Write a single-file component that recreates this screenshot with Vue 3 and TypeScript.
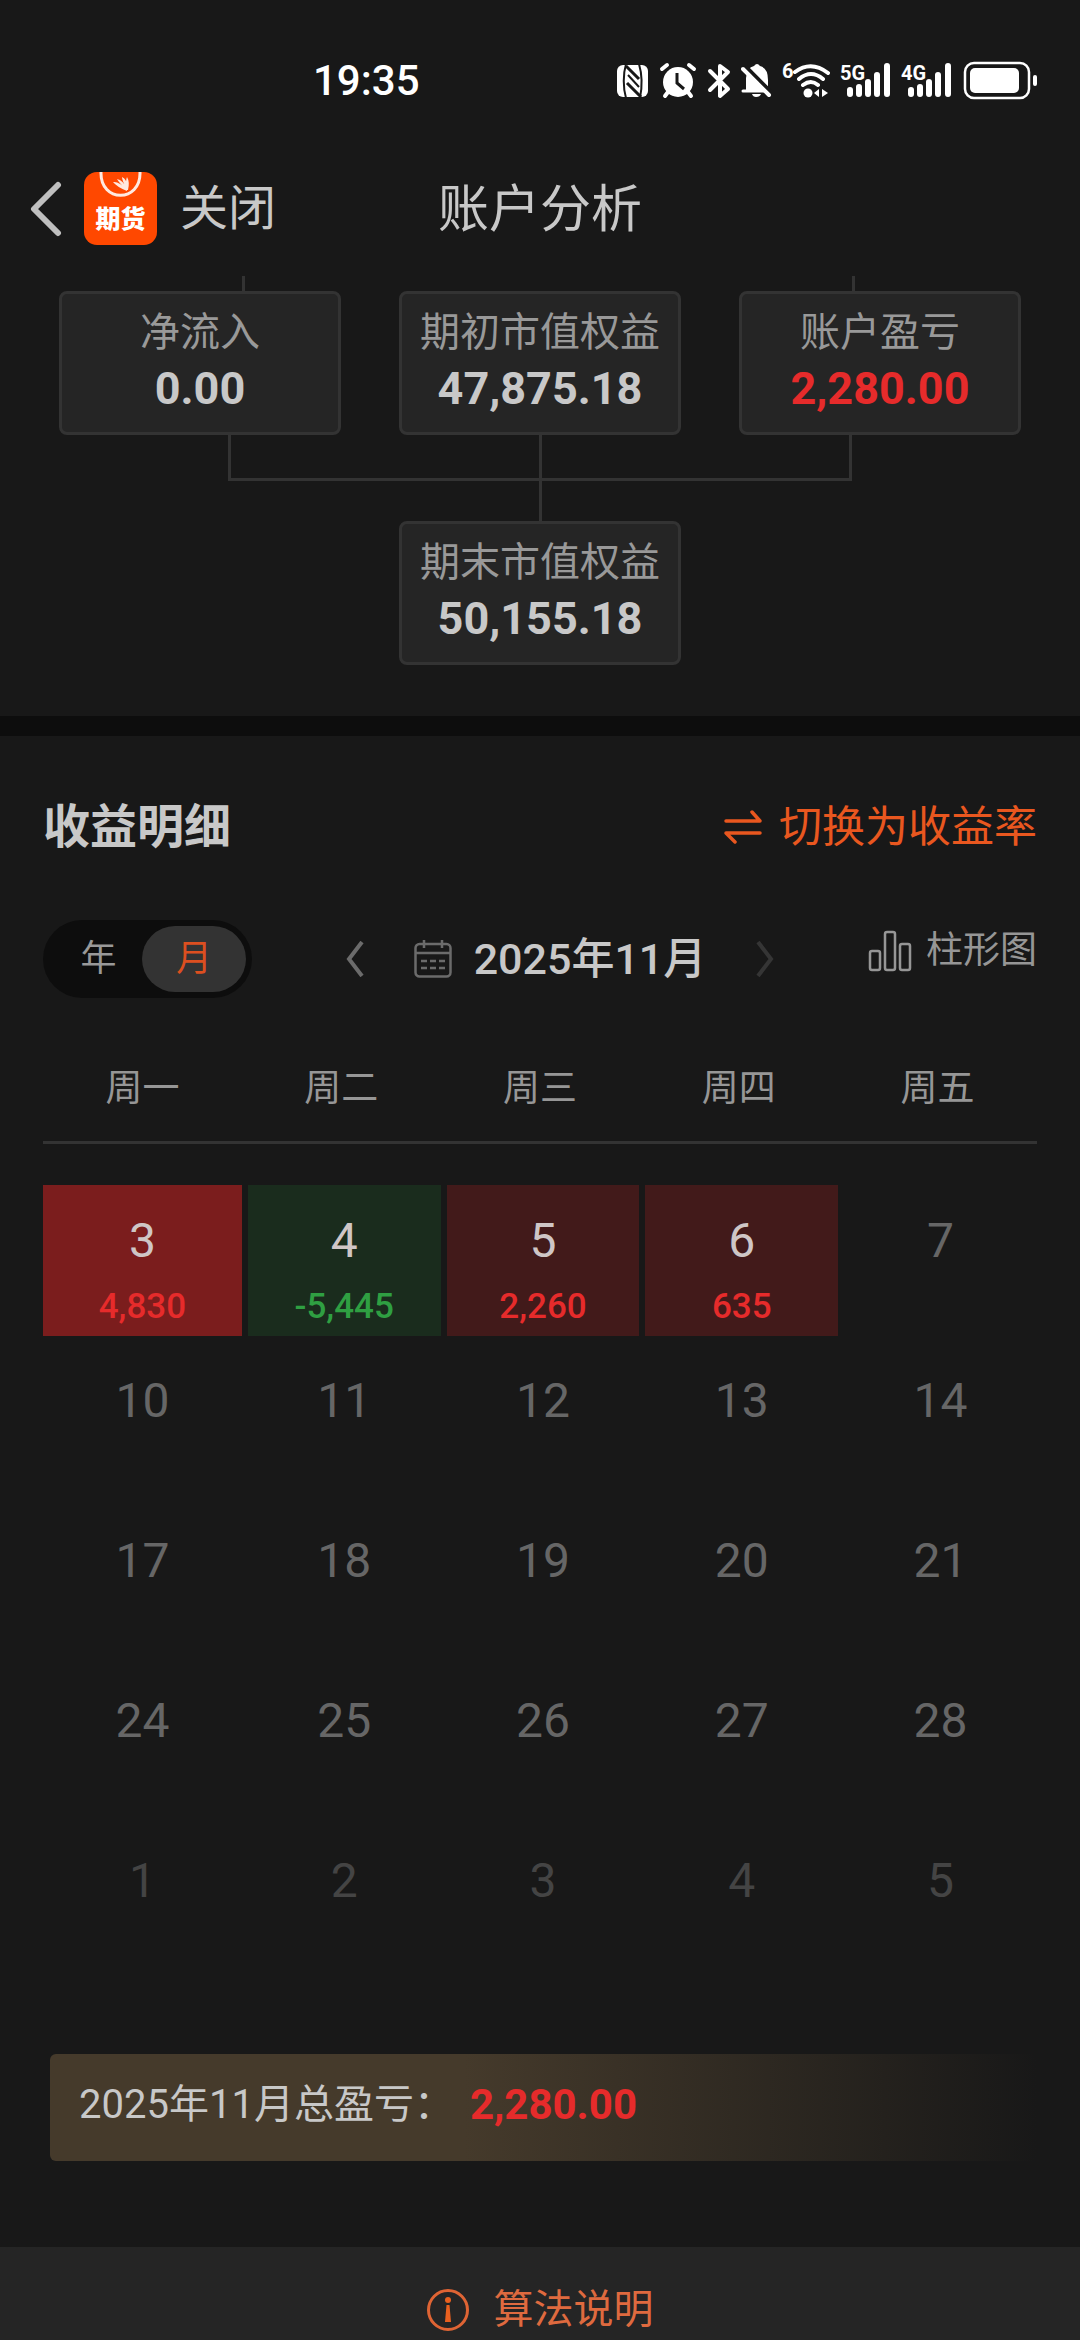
<script setup lang="ts">
import { ref } from 'vue'

interface Figure {
  label: string
  value: string
  gain?: boolean
}

interface Day {
  day: number
  profit?: string
  tone?: 'gain-strong' | 'gain' | 'loss'
  outside?: boolean
}

const sources: Figure[] = [
  { label: '净流入', value: '0.00' },
  { label: '期初市值权益', value: '47,875.18' },
  { label: '账户盈亏', value: '2,280.00', gain: true },
]
const closing: Figure = { label: '期末市值权益', value: '50,155.18' }

const period = ref<'year' | 'month'>('month')
const weekdays = ['周一', '周二', '周三', '周四', '周五']

const plain = (from: number, outside = false): Day[] =>
  Array.from({ length: 5 }, (_, i) => ({ day: from + i, outside }))

const weeks: Day[][] = [
  [
    { day: 3, profit: '4,830', tone: 'gain-strong' },
    { day: 4, profit: '-5,445', tone: 'loss' },
    { day: 5, profit: '2,260', tone: 'gain' },
    { day: 6, profit: '635', tone: 'gain' },
    { day: 7 },
  ],
  plain(10),
  plain(17),
  plain(24),
  plain(1, true),
]

const networks = ['5G', '4G']
</script>

<template>
  <div class="page">
    <div class="status">
      <span class="time">19:35</span>
      <div class="status-icons">
        <svg width="32" height="42" viewBox="0 0 32 42">
          <rect x="0" y="5" width="31" height="32" rx="6" fill="#fff" />
          <path d="M9 4 C6 14 6 28 9 38 M22 4 C25 14 25 28 23 38" fill="none" stroke="#181818" stroke-width="2" />
          <path d="M9 6 L22 19 M10 23 L24 37" fill="none" stroke="#181818" stroke-width="3" />
          <path d="M11 15 L22 27" fill="none" stroke="#181818" stroke-width="2" />
        </svg>
        <svg width="38" height="42" viewBox="0 0 38 42">
          <circle cx="19" cy="22" r="15" fill="#fff" />
          <path d="M3 9 L8 5 M30 5 L35 9" stroke="#fff" stroke-width="4" stroke-linecap="round" />
          <path d="M9 32 L6 36 M29 32 L32 36" stroke="#fff" stroke-width="4" stroke-linecap="round" />
          <path d="M18 13 V23 L25 29" fill="none" stroke="#181818" stroke-width="3" />
        </svg>
        <svg width="24" height="42" viewBox="0 0 24 42">
          <path d="M3 11 L21 29 L13 36 V6 L21 12 L3 30" fill="none" stroke="#fff" stroke-width="4" stroke-linejoin="round" stroke-linecap="round" />
        </svg>
        <svg width="31" height="42" viewBox="0 0 31 42">
          <path d="M5 32 V18 Q6 7 13 6 Q16 2 19 6 Q27 8 27 20 V32 Z" fill="#fff" />
          <path d="M2 31 H25" stroke="#fff" stroke-width="3" stroke-linecap="round" />
          <path d="M11 34 H20 Q19 37 15 37 Q12 37 11 34 Z" fill="#fff" />
          <path d="M4 6 L31 33" stroke="#181818" stroke-width="4" />
          <path d="M2 9 L28 35" stroke="#fff" stroke-width="4" stroke-linecap="round" />
        </svg>
        <svg width="48" height="42" viewBox="0 0 48 42">
          <text x="0" y="18" class="badge">6</text>
          <path d="M13 12 Q29 0 46 13 M17 19 Q29 9 41 19 M21 25 Q29 19 36 25" fill="none" stroke="#fff" stroke-width="4" stroke-linecap="round" />
          <circle cx="26" cy="33" r="4.5" fill="#fff" />
          <path d="M37 29 V37 L32 33 Z M40 29 L46 33 L40 37 Z" fill="#fff" />
        </svg>
        <svg v-for="n in networks" :key="n" width="51" height="42" viewBox="0 0 51 42">
          <text x="0" y="20" class="badge">{{ n }}</text>
          <path d="M10 30 V34 M19 27 V34 M28 22 V34 M37 15 V34 M47 6 V34" stroke="#fff" stroke-width="6" stroke-linecap="round" />
        </svg>
        <svg width="75" height="42" viewBox="0 0 75 42">
          <rect x="3" y="3" width="64" height="35" rx="9" fill="none" stroke="#fff" stroke-width="2.5" />
          <rect x="8" y="8" width="49" height="25" rx="5" fill="#fff" />
          <rect x="71" y="15" width="4" height="11" rx="2" fill="#fff" />
        </svg>
      </div>
    </div>

    <header class="nav">
      <div class="nav-left">
        <button class="back" type="button" aria-label="返回">
          <svg width="32" height="56" viewBox="0 0 32 56">
            <path d="M28 4 L4 28 L28 52" fill="none" stroke="#bfbfbf" stroke-width="6" stroke-linecap="round" stroke-linejoin="round" />
          </svg>
        </button>
        <span class="logo">
          <svg width="73" height="28" viewBox="0 0 73 28">
            <path d="M17 0 C16 31 57 31 56 0" fill="none" stroke="#ffe9e0" stroke-width="3" />
            <path d="M43 19 Q33 15 29 10 Q35 9 43 18 Z M43 18 Q35 11 33 7 Q39 8 43 17 Z M43 17 Q38 9 38 5 Q43 7 44 17 Z M43 18 Q41 9 43 5 Q46 10 44 18 Z" fill="#ffe9e0" />
          </svg>
          <span class="logo-text">期货</span>
        </span>
        <button class="close" type="button">关闭</button>
      </div>
      <h1>账户分析</h1>
    </header>

    <main>
      <section class="equity">
        <div class="stubs"></div>
        <div class="cards">
          <div v-for="f in sources" :key="f.label" class="card">
            <span class="label">{{ f.label }}</span>
            <strong :class="{ red: f.gain }">{{ f.value }}</strong>
          </div>
        </div>
        <div class="bracket"><i class="stem"></i></div>
        <i class="stem lower"></i>
        <div class="cards">
          <div class="card closing">
            <span class="label">{{ closing.label }}</span>
            <strong>{{ closing.value }}</strong>
          </div>
        </div>
      </section>

      <section class="detail">
        <div class="heading">
          <h2>收益明细</h2>
          <button class="swap" type="button">
            <svg width="38" height="34" viewBox="0 0 38 34">
              <path d="M2 11 H36 L28 2 M36 23 H2 L11 32" fill="none" stroke="#e9571f" stroke-width="3.5" stroke-linejoin="round" stroke-linecap="round" />
            </svg>
            切换为收益率
          </button>
        </div>

        <div class="controls">
          <div class="toggle">
            <button type="button" :class="{ on: period === 'year' }" @click="period = 'year'">年</button>
            <button type="button" :class="{ on: period === 'month' }" @click="period = 'month'">月</button>
          </div>
          <div class="picker">
            <button type="button" aria-label="上个月">
              <svg width="18" height="36" viewBox="0 0 18 36">
                <path d="M16 1 L3 18 L16 35" fill="none" stroke="#6b6b6b" stroke-width="4" />
              </svg>
            </button>
            <button class="month" type="button">
              <svg width="38" height="38" viewBox="0 0 38 38">
                <g fill="none" stroke="#6b6b6b" stroke-width="2.5">
                  <rect x="1.5" y="4" width="35" height="32.5" rx="4" />
                  <path d="M1 13 H37 M10 0 V8 M28 0 V8" />
                  <path d="M7 21 H31 M7 28 H31" stroke-dasharray="6 3" />
                </g>
              </svg>
              2025年11月
            </button>
            <button type="button" aria-label="下个月">
              <svg width="18" height="36" viewBox="0 0 18 36">
                <path d="M2 1 L15 18 L2 35" fill="none" stroke="#353535" stroke-width="4" />
              </svg>
            </button>
          </div>
          <button class="chart" type="button">
            <svg width="44" height="42" viewBox="0 0 44 42">
              <g fill="none" stroke="#969696" stroke-width="2.5">
                <rect x="2" y="21" width="10" height="19" rx="2" />
                <rect x="17" y="2" width="10" height="38" rx="2" />
                <rect x="32" y="14" width="10" height="26" rx="2" />
              </g>
            </svg>
            柱形图
          </button>
        </div>

        <table>
          <thead>
            <tr>
              <th v-for="w in weekdays" :key="w" scope="col">{{ w }}</th>
            </tr>
          </thead>
          <tbody>
            <tr v-for="(week, i) in weeks" :key="i">
              <td v-for="d in week" :key="d.day">
                <div class="day" :class="[d.tone, { outside: d.outside }]">
                  <span class="number">{{ d.day }}</span>
                  <span v-if="d.profit" class="profit">{{ d.profit }}</span>
                </div>
              </td>
            </tr>
          </tbody>
        </table>

        <p class="total"><span>2025年11月总盈亏：</span><strong>2,280.00</strong></p>
      </section>
    </main>

    <footer>
      <button type="button">
        <svg width="42" height="42" viewBox="0 0 42 42">
          <circle cx="21" cy="21" r="19.5" fill="none" stroke="#df6434" stroke-width="3" />
          <circle cx="21" cy="11" r="3" fill="#e9601f" />
          <path d="M19.5 16 H22.5 L24 33 H18 Z" fill="#e9601f" />
        </svg>
        算法说明
      </button>
    </footer>
  </div>
</template>

<style>
body {
  margin: 0;
  background: #181818;
}
</style>

<style scoped>
.page {
  display: flex;
  flex-direction: column;
  min-height: 100vh;
  background: #181818;
  color: #c8c8c8;
  font-family: Roboto, "Noto Sans CJK SC", sans-serif;
  font-size: 40px;
  line-height: 56px;
}

button {
  display: flex;
  align-items: center;
  padding: 0;
  border: 0;
  background: none;
  color: inherit;
  font: inherit;
}

svg {
  display: block;
  flex: none;
}

h1,
h2,
p {
  margin: 0;
}

.status {
  display: flex;
  align-items: center;
  justify-content: space-between;
  padding: 60px 43px 0 313px;
  color: #fff;
}

.time {
  font-size: 42px;
  font-weight: 500;
  line-height: 42px;
}

.status-icons {
  display: flex;
  gap: 10px;
}

.badge {
  fill: #fff;
  font-size: 20px;
  font-weight: 700;
}

.nav {
  display: grid;
  grid-template-columns: 1fr auto 1fr;
  align-items: center;
  padding: 70px 30px 31px;
}

.nav-left {
  display: flex;
  align-items: center;
}

.logo {
  display: flex;
  flex-direction: column;
  align-items: center;
  width: 73px;
  height: 73px;
  margin: 0 23px 0 22px;
  border-radius: 13px;
  background: #ff4800;
  overflow: hidden;
}

.logo-text {
  color: #fff;
  font-size: 25px;
  font-weight: 900;
  line-height: 40px;
}

.close {
  font-size: 48px;
}

h1 {
  padding-top: 2px;
  font-size: 51px;
  font-weight: 400;
}

.equity {
  padding: 0 59px 51px;
}

.stubs {
  height: 15px;
  margin: 0 166px 0 183px;
  border: solid #333;
  border-width: 0 3px;
}

.cards {
  display: grid;
  grid-template-columns: repeat(3, 1fr);
  gap: 58px;
}

.card {
  display: flex;
  flex-direction: column;
  align-items: center;
  padding: 11px 0 15px;
  border: 3px solid #333;
  border-radius: 8px;
  background: #252525;
}

.closing {
  grid-column: 2;
}

.label {
  color: #999;
  white-space: nowrap;
}

.card strong {
  font-size: 45px;
}

.card .red,
.total strong {
  color: #e62b2b;
}

.bracket {
  height: 43px;
  margin: 0 169px;
  border: solid #333;
  border-width: 0 3px 3px;
}

.stem {
  display: block;
  width: 3px;
  height: 43px;
  margin: 0 auto;
  background: #333;
}

.stem.lower {
  height: 40px;
}

.detail {
  padding: 63px 43px 86px;
  border-top: 20px solid #0d0d0d;
}

.heading {
  display: flex;
  align-items: center;
  justify-content: space-between;
}

h2 {
  font-size: 47px;
  font-weight: 700;
}

.swap {
  gap: 17px;
  color: #e9571f;
  font-size: 43px;
}

.controls {
  display: flex;
  align-items: center;
  justify-content: space-between;
  margin-top: 65px;
}

.toggle {
  display: flex;
  padding: 6px 6px 6px 12px;
  border-radius: 40px;
  background: #0d0d0d;
  color: #999;
}

.toggle button {
  justify-content: center;
  width: 87px;
  height: 66px;
  border-radius: 33px;
  font-size: 36px;
}

.toggle .on {
  width: 104px;
  background: #333;
  color: #dc4f20;
}

.picker {
  display: flex;
  align-items: center;
  gap: 50px;
}

.month {
  gap: 22px;
  font-size: 43px;
  font-weight: 500;
  line-height: 52px;
}

.chart {
  align-self: flex-start;
  gap: 14px;
  color: #969696;
  font-size: 37px;
  line-height: 62px;
}

table {
  width: 100%;
  margin-top: 63px;
  border-spacing: 0;
  table-layout: fixed;
  text-align: center;
}

th {
  padding: 0 0 24px;
  border-bottom: 3px solid #333;
  color: #969696;
  font-size: 37px;
  font-weight: 400;
}

td {
  padding: 0 0 9px 6px;
}

td:first-child {
  padding-left: 0;
}

tr:first-child td {
  padding-top: 41px;
}

.day {
  display: flex;
  flex-direction: column;
  gap: 14px;
  box-sizing: border-box;
  height: 151px;
  padding-top: 26px;
  color: #666;
}

.number {
  font-size: 48px;
  line-height: 60px;
}

.profit {
  font-size: 35px;
  font-weight: 500;
  line-height: 44px;
}

.outside {
  color: #444;
}

.gain-strong {
  background: #7b1d1d;
}

.gain {
  background: #421a1a;
}

.loss {
  background: #1a2c1d;
}

.gain-strong .number,
.gain .number,
.loss .number {
  color: #cfc6c6;
}

.gain-strong .profit,
.gain .profit {
  color: #e62b2b;
}

.loss .profit {
  color: #2f9f42;
}

.total {
  display: flex;
  align-items: center;
  gap: 16px;
  margin: 69px 0 0 7px;
  padding: 23px 0 28px 29px;
  border-radius: 6px;
  background: linear-gradient(90deg, #453a2b 42%, #181818);
}

.total strong {
  font-size: 42px;
}

footer {
  flex: 1;
  padding-top: 35px;
  background: #252525;
  color: #df6a3f;
}

footer button {
  gap: 25px;
  margin: 0 auto;
}
</style>
